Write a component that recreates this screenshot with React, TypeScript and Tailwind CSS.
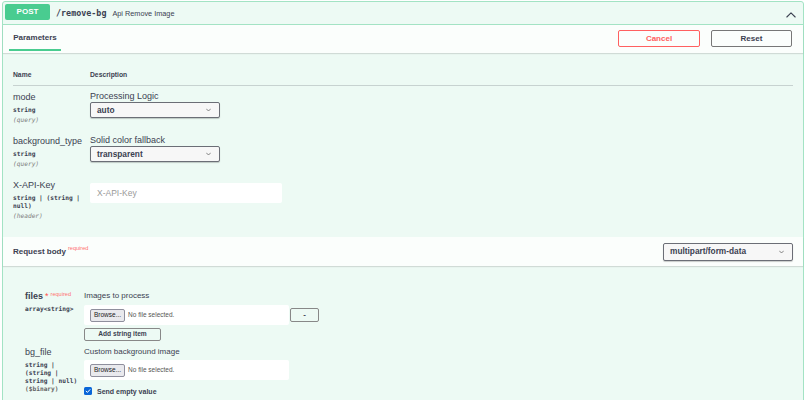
const sans = "font-['Liberation_Sans',Arial,sans-serif]";
const mono = "font-['DejaVu_Sans_Mono','Liberation_Mono',monospace]";

function Chevron({ className }: { className?: string }) {
  return (
    <svg viewBox="0 0 10 6" className={className} fill="none">
      <path d="M1 1l4 4 4-4" stroke="#555" strokeWidth="1.4" strokeLinecap="round" strokeLinejoin="round" />
    </svg>
  );
}

function Select({ value, w, h }: { value: string; w: string; h: string }) {
  return (
    <div
      className={`${w} ${h} flex items-center justify-between pl-[6px] pr-[8px] bg-[#f7f7f7] border border-[#6b6e76] rounded-[2px] shadow-[0_1px_1px_rgba(0,0,0,0.2)]`}
    >
      <span className="text-[8.3px] font-bold text-[#3b4151] leading-none">{value}</span>
      <Chevron className="w-[5px] h-[4px]" />
    </div>
  );
}

function FileBox() {
  return (
    <div className="w-[205px] h-[20px] bg-white rounded-[2px] flex items-center pl-[6px] gap-[3px]">
      <span className="h-[13px] px-[3px] flex items-center bg-[#e9e9ed] border border-[#8f8f9d] rounded-[2px] text-[6.5px] text-[#222] leading-none">
        Browse...
      </span>
      <span className="text-[6.5px] text-[#555] leading-none">No file selected.</span>
    </div>
  );
}

export default function App() {
  return (
    <div className={`w-[806px] h-[400px] overflow-hidden bg-white pt-px ${sans} text-[#3b4151] text-[9px] leading-[12px]`}>
      <div className="ml-[2px] w-[802px] h-[420px] border border-[#a3e3c4] rounded-[3px] bg-[#edfaf4]">
        {/* summary */}
        <div className="h-[23px] flex items-start pt-[2px] border-b border-[#a3e3c4]">
          <div className="ml-[2px] w-[45px] h-[16px] rounded-[2px] bg-[#49cc90] flex items-center justify-center text-white text-[8px] font-bold">
            POST
          </div>
          <span className={`ml-[6px] mt-[4px] ${mono} text-[8.4px] font-bold leading-[10px]`}>/remove-bg</span>
          <span className="ml-[6px] mt-[5px] text-[7.3px] leading-[9px]">Api Remove Image</span>
          <svg viewBox="0 0 12 8" className="ml-auto mr-[7px] mt-[7px] w-[10px] h-[7px]" fill="none">
            <path d="M1 7l5-5 5 5" stroke="#3b4151" strokeWidth="1.3" strokeLinecap="round" strokeLinejoin="round" />
          </svg>
        </div>

        {/* parameters header */}
        <div className="h-[28px] flex bg-[#fbfefc] shadow-[0_1px_1px_rgba(0,0,0,0.12)]">
          <div className="ml-[6px] w-[52px] pt-[8px] flex flex-col">
            <span className="text-[8px] font-bold leading-[10px] text-center">Parameters</span>
            <span className="mt-[6px] h-[2px] bg-[#49cc90]" />
          </div>
          <div className="ml-auto mr-[11px] pt-[5px] flex gap-[11px]">
            <button className="w-[82px] h-[17px] border border-[#ff6060] rounded-[2px] text-[#ff6060] text-[8px] font-bold bg-transparent">
              Cancel
            </button>
            <button className="w-[81px] h-[17px] border border-[#777] rounded-[2px] text-[#3b4151] text-[8px] font-bold bg-transparent">
              Reset
            </button>
          </div>
        </div>

        {/* parameters table */}
        <div className="px-[10px] pt-[12px] h-[184px]">
          <div className="h-[21px] flex items-center border-b border-[#c7d2d0] text-[6.75px] font-bold">
            <span className="w-[77px]">Name</span>
            <span>Description</span>
          </div>

          <div className="pt-[5px] flex flex-col">
            {[
              { name: "mode", label: "Processing Logic", value: "auto", type: "string", where: "(query)" },
              { name: "background_type", label: "Solid color fallback", value: "transparent", type: "string", where: "(query)" },
            ].map((p) => (
              <div key={p.name} className="h-[44px] flex">
                <div className="w-[77px]">
                  <div className="text-[9px] leading-[12px]">{p.name}</div>
                  <div className={`mt-[3px] ${mono} text-[6.2px] font-bold leading-[8px]`}>{p.type}</div>
                  <div className={`mt-[2px] ${mono} text-[6.2px] italic text-[#808080] leading-[8px]`}>{p.where}</div>
                </div>
                <div className="flex flex-col">
                  <div className="text-[9px] leading-[11px]">{p.label}</div>
                  <Select value={p.value} w="w-[130px]" h="h-[16px]" />
                </div>
              </div>
            ))}

            <div className="flex">
              <div className="w-[77px]">
                <div className="text-[9px] leading-[12px]">X-API-Key</div>
                <div className={`mt-[3px] ${mono} text-[6.2px] font-bold leading-[8px]`}>
                  string | (string |<br />null)
                </div>
                <div className={`mt-[2px] ${mono} text-[6.2px] italic text-[#808080] leading-[8px]`}>(header)</div>
              </div>
              <div className="mt-[4px] w-[192px] h-[20px] bg-white rounded-[2px] flex items-center pl-[7px] text-[8.5px] text-[#9a9a9a]">
                X-API-Key
              </div>
            </div>
          </div>
        </div>

        {/* request body header */}
        <div className="h-[29px] flex items-center bg-[#fbfefc] shadow-[0_1px_1px_rgba(0,0,0,0.12)]">
          <span className="ml-[10px] text-[8px] font-bold">Request body</span>
          <span className="ml-[2px] -mt-[7px] text-[5.6px] text-[#ff7070]">required</span>
          <div className="ml-auto mr-[10px]">
            <Select value="multipart/form-data" w="w-[130px]" h="h-[18px]" />
          </div>
        </div>

        {/* request body */}
        <div className="pl-[22px] pt-[24px]">
          <div className="flex">
            <div className="w-[59px]">
              <div className="flex items-start leading-[12px]">
                <span className="text-[9px] font-bold">files</span>
                <span className="ml-[2px] text-[9px] text-[#ff5050] leading-[12px]">*</span>
                <span className="ml-[2px] text-[5.6px] text-[#ff7070] leading-[8px]">required</span>
              </div>
              <div className={`mt-[3px] ${mono} text-[6.2px] font-bold leading-[8px]`}>array&lt;string&gt;</div>
            </div>
            <div className="flex flex-col items-start">
              <div className="text-[8px] leading-[11px]">Images to process</div>
              <div className="mt-[4px] flex items-center">
                <FileBox />
                <button className="ml-[1px] w-[29px] h-[14px] border border-[#888] rounded-[2px] text-[8px] font-bold leading-none">
                  -
                </button>
              </div>
              <button className="mt-[3px] w-[77px] h-[13px] border border-[#888] rounded-[2px] text-[6.6px] font-bold leading-none">
                Add string item
              </button>
            </div>
          </div>

          <div className="mt-[5px] flex">
            <div className="w-[59px]">
              <div className="text-[9px] leading-[12px]">bg_file</div>
              <div className={`mt-[3px] ${mono} text-[6.2px] font-bold leading-[8px]`}>
                string |<br />(string |<br />string | null)
              </div>
              <div className={`${mono} text-[6.2px] font-bold text-[#666] leading-[8px]`}>($binary)</div>
            </div>
            <div className="flex flex-col items-start">
              <div className="text-[8px] leading-[11px]">Custom background image</div>
              <div className="mt-[3px]">
                <FileBox />
              </div>
              <div className="mt-[6px] h-[10px] flex items-center gap-[5px]">
                <span className="w-[8px] h-[8px] rounded-[1.5px] bg-[#0a66d8] flex items-center justify-center">
                  <svg viewBox="0 0 8 8" className="w-[6px] h-[6px]" fill="none">
                    <path d="M1.5 4.2l1.7 1.7L6.6 2.2" stroke="white" strokeWidth="1.3" strokeLinecap="round" strokeLinejoin="round" />
                  </svg>
                </span>
                <span className="text-[7px] font-bold leading-none">Send empty value</span>
              </div>
            </div>
          </div>
        </div>
      </div>
    </div>
  );
}
